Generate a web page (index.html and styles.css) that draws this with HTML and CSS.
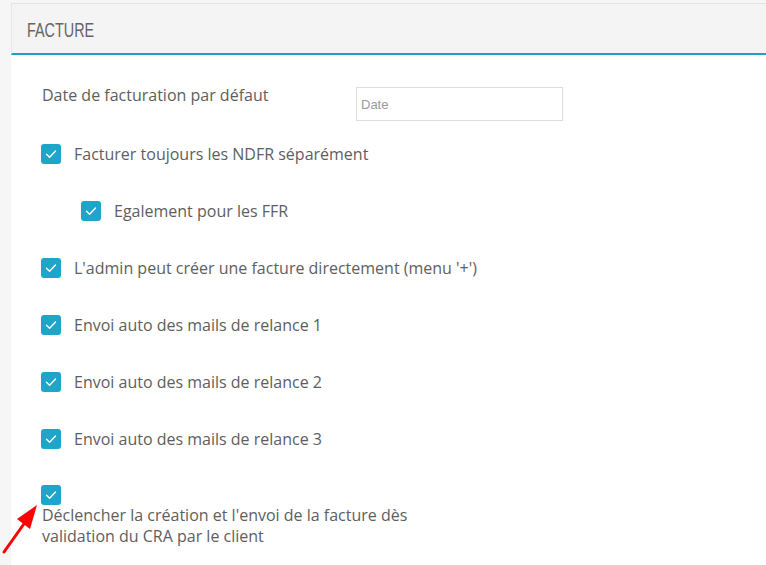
FILE: index.html
```html
<!DOCTYPE html>
<html lang="fr">
<head>
<meta charset="utf-8">
<link rel="stylesheet" href="styles.css">
</head>
<body>
<div class="page">
  <div class="panel">
    <div class="panel-head"><span class="title">FACTURE</span></div>
    <div class="panel-body">
      <div class="form-row">
        <label class="field-label">Date de facturation par défaut</label>
        <input class="date-input" type="text" placeholder="Date">
      </div>
      <div class="check-row"><span class="cb"><svg viewBox="0 0 20 20"><path d="M5.5 10.2 L8.6 13.2 L14.5 7" fill="none" stroke="#fff" stroke-width="1.4" stroke-linecap="round" stroke-linejoin="round"/></svg></span><span class="cb-text">Facturer toujours les NDFR séparément</span></div>
      <div class="check-row nested"><span class="cb"><svg viewBox="0 0 20 20"><path d="M5.5 10.2 L8.6 13.2 L14.5 7" fill="none" stroke="#fff" stroke-width="1.4" stroke-linecap="round" stroke-linejoin="round"/></svg></span><span class="cb-text">Egalement pour les FFR</span></div>
      <div class="check-row"><span class="cb"><svg viewBox="0 0 20 20"><path d="M5.5 10.2 L8.6 13.2 L14.5 7" fill="none" stroke="#fff" stroke-width="1.4" stroke-linecap="round" stroke-linejoin="round"/></svg></span><span class="cb-text">L'admin peut créer une facture directement (menu '+')</span></div>
      <div class="check-row"><span class="cb"><svg viewBox="0 0 20 20"><path d="M5.5 10.2 L8.6 13.2 L14.5 7" fill="none" stroke="#fff" stroke-width="1.4" stroke-linecap="round" stroke-linejoin="round"/></svg></span><span class="cb-text">Envoi auto des mails de relance 1</span></div>
      <div class="check-row"><span class="cb"><svg viewBox="0 0 20 20"><path d="M5.5 10.2 L8.6 13.2 L14.5 7" fill="none" stroke="#fff" stroke-width="1.4" stroke-linecap="round" stroke-linejoin="round"/></svg></span><span class="cb-text">Envoi auto des mails de relance 2</span></div>
      <div class="check-row"><span class="cb"><svg viewBox="0 0 20 20"><path d="M5.5 10.2 L8.6 13.2 L14.5 7" fill="none" stroke="#fff" stroke-width="1.4" stroke-linecap="round" stroke-linejoin="round"/></svg></span><span class="cb-text">Envoi auto des mails de relance 3</span></div>
      <div class="check-block">
        <span class="cb"><svg viewBox="0 0 20 20"><path d="M5.5 10.2 L8.6 13.2 L14.5 7" fill="none" stroke="#fff" stroke-width="1.4" stroke-linecap="round" stroke-linejoin="round"/></svg></span>
        <span class="block-text">Déclencher la création et l'envoi de la facture dès validation du CRA par le client</span>
        <svg class="arrow" viewBox="0 0 40 60" width="40" height="60"><line x1="4" y1="50" x2="26" y2="19" stroke="#f00" stroke-width="3" stroke-linecap="round"/><polygon points="37,3 17,17 30,27" fill="#f00"/></svg>
      </div>
    </div>
  </div>
</div>
</body>
</html>
```
FILE: styles.css
```css
html, body {
  margin: 0;
  padding: 0;
  background: #f6f6f6;
}
body {
  font-family: "Open Sans", "Liberation Sans", sans-serif;
  color: #5e5e5e;
  font-size: 16px;
}
.page {
  padding: 3px 0 0 11px;
  height: 562px;
  overflow: hidden;
}
.panel {
  background: #fff;
  height: 100%;
}
.panel-head {
  height: 49px;
  background: #f4f4f4;
  border-top: 1px solid #e3e3e3;
  border-left: 1px solid #e6e6e6;
  border-bottom: 2px solid #1ba3c6;
  display: flex;
  align-items: center;
  padding-left: 15px;
}
.title {
  font-family: "Liberation Sans Narrow", "Liberation Sans", sans-serif;
  font-size: 20px;
  color: #666;
  display: inline-block;
  transform: scaleX(0.72);
  transform-origin: left center;
  margin-top: 4px;
}
.panel-body {
  padding: 29px 0 0 30px;
  display: flex;
  flex-direction: column;
}
.form-row {
  display: flex;
  align-items: flex-start;
}
.field-label {
  width: 314px;
  line-height: 22px;
  padding-left: 1px;
}
.date-input {
  box-sizing: border-box;
  width: 207px;
  height: 34px;
  margin-top: 3px;
  border: 1px solid #ddd;
  border-radius: 0;
  padding: 0 4px;
  font-family: "Liberation Sans", Arial, sans-serif;
  font-size: 13px;
  color: #555;
  outline: none;
}
.date-input::placeholder {
  color: #999;
}
.check-row {
  display: flex;
  align-items: center;
  height: 20px;
  margin-top: 37px;
  gap: 13px;
}
.form-row + .check-row {
  margin-top: 23px;
}
.check-row.nested {
  padding-left: 40px;
  gap: 13px;
}
.cb {
  width: 20px;
  height: 20px;
  border-radius: 3px;
  background: #1ea5c8;
  flex: none;
  display: block;
}
.cb svg {
  width: 20px;
  height: 20px;
  display: block;
}
.cb-text {
  line-height: 22px;
}
.check-block {
  position: relative;
  margin-top: 36px;
  display: flex;
  flex-direction: column;
  align-items: flex-start;
}
.block-text {
  width: 390px;
  line-height: 21px;
  padding-left: 1px;
  margin-top: 0;
}
.arrow {
  position: absolute;
  left: -41px;
  top: 17px;
}
```
